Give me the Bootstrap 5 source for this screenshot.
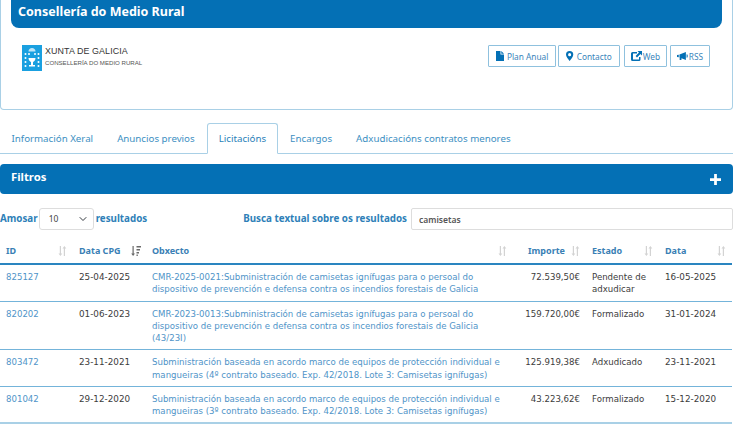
<!DOCTYPE html>
<html lang="gl"><head><meta charset="utf-8">
<link href="https://cdn.jsdelivr.net/npm/bootstrap@5.3.0/dist/css/bootstrap.min.css" rel="stylesheet">
<style>
html,body{height:424px;overflow:hidden;background:#fff}
body{width:733px;font-family:"Noto Sans",sans-serif;color:#333}
:root{--blue:#0470b5;--lblue:#a9d0e6;--txt:#2e7fb8}
.panel{height:110px;border:1px solid var(--lblue);border-top:0;border-radius:0 0 4px 4px;padding:0 10px;margin-bottom:13px}
.panel-head{background:var(--blue);color:#fff;height:28px;border-radius:0 0 8px 8px;padding:0 7px;font-size:12.5px;font-weight:700;line-height:24.500px;margin-bottom:17px}
.logo{margin-left:11px;height:26px;gap:3px;color:#333}
.logo b{display:block;font:500 8.9px/11px "Liberation Sans",sans-serif;letter-spacing:.1px;margin-top:1px}
.logo small{display:block;font:6.1px/8px "Liberation Sans",sans-serif;color:#555;margin-top:2px}
.tool{margin-right:12px}
.tool .btn{height:22px;padding:0 7px;font-size:8.3px;line-height:19px;border:1px solid #8fc1de;border-radius:1px;color:#3a85bb;background:#fff;display:flex;align-items:center;gap:3px;font-family:"Noto Sans",sans-serif}
.tool .btn+.btn{margin-left:2px}
.tool .btn.c{padding:0 7px}
.tool .btn.w{margin-left:4px;gap:1px;padding:0 6px}
.tool .btn.r{margin-left:3px;gap:1px;padding:0 6px}
.tool svg{fill:#0470b5;height:10px;width:auto}
.tool .r svg{height:8px}
.nav-tabs{border-bottom:1px solid var(--lblue);padding-left:0;height:31px;flex-wrap:nowrap;margin-bottom:10px}
.nav-tabs .nav-link{height:30px;padding:0 10.5px;line-height:30px;font-size:9.72px;color:#3d8fc2;border:1px solid transparent;border-radius:3px 3px 0 0;margin:0;background:none}
.nav-tabs .nav-item{margin-bottom:0}
.nav-tabs .nav-item+.nav-item{margin-left:1px}
.nav-tabs .nav-link.active{border-color:var(--lblue) var(--lblue) #fff;height:31px;color:#2a7fb8;background:#fff}
.filtros{background:var(--blue);color:#fff;height:30px;border-radius:4px;padding:0 12px 3px 11px;font-size:11.3px;font-weight:700;margin-bottom:14px}
.filtros svg{width:11px;height:11px;fill:#fff;margin-top:3px}
.ctrl{height:22px;margin-bottom:8px;font-size:9.8px;font-weight:700;color:var(--txt)}
.ctrl .form-select{width:55px;height:22px;min-height:0;padding:0 0 0 9px;font-size:8.5px;margin:0 2px 0 1px;border-color:#ddd;border-radius:3px;color:#444;background-position:right 5px center;background-size:10px 8px}
.ctrl .form-control{width:322px;height:22px;min-height:0;padding:0 7px;font-size:8.5px;margin-left:4px;border-color:#ddd;border-radius:2px;color:#555;font-weight:600}
.tbl{table-layout:fixed;width:732px;margin:0;font-family:"DejaVu Sans",Verdana,sans-serif;font-size:8.6px;line-height:12.1px;color:#333}
.tbl>thead>tr>th{height:26px;padding:0 6px;border-bottom:2px solid #2a85c0;font:700 9px "Noto Sans",sans-serif;color:#3a7fb5;vertical-align:middle;position:relative}
.tbl>tbody>tr>td{padding:6px 6px 5.5px;border-bottom:1px solid #74b4da;color:#3c3c3c;background:none;box-shadow:none}
.tbl>tbody>tr:last-child>td{border-bottom:2px solid #a9d0e6;padding-bottom:5px}
.tbl td.d{font-size:8.8px}
.tbl a{color:#4f94c8;text-decoration:none}
.tbl .imp{text-align:right}
.tbl>thead>tr>th.imp{padding-right:21px}
.sort{position:absolute;right:5px;top:8px;width:10px;height:10px;fill:#d3d3d3}
.sort.on{fill:#6a6a6a}
</style></head><body>
<div class="panel">
  <div class="panel-head">Consellería do Medio Rural</div>
  <div class="d-flex justify-content-between align-items-start">
    <div class="logo d-flex align-items-start">
      <svg width="20" height="26" viewBox="0 0 20 26"><rect width="20" height="26" fill="#1aa0e0"/><path d="M6.500 6.500c0-2 1.500-3.500 3.500-3.500s3.500 1.500 3.500 3.500z" fill="#bfe5f8"/><path d="M6.500 13h7c0 2.500-1.500 3.500-2.500 4v3h2v1.500h-6V20h2v-3c-1-.5-2.500-1.500-2.500-4z" fill="#fff"/><g fill="#fff"><circle cx="3.500" cy="9" r="1"/><circle cx="7" cy="9" r="1"/><circle cx="13" cy="9" r="1"/><circle cx="16.500" cy="9" r="1"/><circle cx="3.500" cy="13" r="1"/><circle cx="16.500" cy="13" r="1"/><circle cx="3.500" cy="17" r="1"/><circle cx="16.500" cy="17" r="1"/><circle cx="3.500" cy="21" r="1"/><circle cx="16.500" cy="21" r="1"/></g></svg>
      <div><b>XUNTA DE GALICIA</b><small>CONSELLERÍA DO MEDIO RURAL</small></div>
    </div>
    <div class="tool d-flex">
      <a class="btn" href="#"><svg viewBox="0 0 8 10"><path d="M0 0h4.500v3.500H8V10H0zM5.300 0 8 2.700H5.300z"/></svg>Plan Anual</a>
      <a class="btn c" href="#"><svg viewBox="0 0 8 11"><path fill-rule="evenodd" d="M4 0a4 4 0 0 1 4 4c0 2-2.500 5-4 7-1.500-2-4-5-4-7a4 4 0 0 1 4-4zm0 2.300a1.700 1.700 0 1 0 0 3.400 1.700 1.700 0 0 0 0-3.400z"/></svg>Contacto</a>
      <a class="btn w" href="#"><svg viewBox="0 0 11 10"><path d="M1.500 1H6v1.500H2v6h6V6h1.500v2.500A1.500 1.500 0 0 1 8 10H1.500A1.500 1.500 0 0 1 0 8.500v-6A1.500 1.500 0 0 1 1.500 1z"/><path d="M6.500 0H11v4.500L9.400 3 6 6.400 4.600 5 8 1.600z"/></svg>Web</a>
      <a class="btn r" href="#"><svg viewBox="0 0 12 9"><path d="M0 3.500 2 3v3l-2-.5zM2.800 2.800 10 0v9L5 7v2H3V6.200l-.2-.1zM10.800 2.500 12 3v3l-1.200.5z"/></svg>RSS</a>
    </div>
  </div>
</div>
<ul class="nav nav-tabs">
  <li class="nav-item"><a class="nav-link" href="#">Información Xeral</a></li>
  <li class="nav-item"><a class="nav-link" href="#">Anuncios previos</a></li>
  <li class="nav-item"><a class="nav-link active" href="#">Licitacións</a></li>
  <li class="nav-item"><a class="nav-link" href="#">Encargos</a></li>
  <li class="nav-item"><a class="nav-link" href="#">Adxudicacións contratos menores</a></li>
</ul>
<div class="filtros d-flex justify-content-between align-items-center"><span>Filtros</span><svg viewBox="0 0 12 12"><path d="M4.500 0h3v4.500H12v3H7.500V12h-3V7.500H0v-3h4.500z"/></svg></div>
<div class="ctrl d-flex align-items-center justify-content-between">
  <div class="d-flex align-items-center">Amosar <select class="form-select"><option>10</option></select> resultados</div>
  <div class="d-flex align-items-center">Busca textual sobre os resultados <input class="form-control" value="camisetas"></div>
</div>
<table class="table tbl">
<colgroup><col style="width:73px"><col style="width:73px"><col style="width:367px"><col style="width:73px"><col style="width:73px"><col style="width:73px"></colgroup>
<thead><tr>
<th>ID<svg class="sort" viewBox="0 0 10 10"><use href="#s"/></svg></th>
<th>Data CPG<svg class="sort on" viewBox="0 0 10 10"><path d="M1.500 0h1.200v7.500H4L2.100 10 .2 7.500h1.300zM5.500 0H10v1.500H5.500zM5.500 3H9v1.500H5.500zM5.500 6H8v1.500H5.500zM5.500 8.500h1.300V10H5.500z"/></svg></th>
<th>Obxecto<svg class="sort" viewBox="0 0 10 10"><use href="#s"/></svg></th>
<th class="imp">Importe<svg class="sort" viewBox="0 0 10 10"><use href="#s"/></svg></th>
<th>Estado<svg class="sort" viewBox="0 0 10 10"><use href="#s"/></svg></th>
<th>Data<svg class="sort" viewBox="0 0 10 10"><use href="#s"/></svg></th>
</tr></thead>
<tbody>
<tr><td><a href="#">825127</a></td><td class="d">25-04-2025</td><td><a href="#">CMR-2025-0021:Subministración de camisetas ignífugas para o persoal do dispositivo de prevención e defensa contra os incendios forestais de Galicia</a></td><td class="imp">72.539,50€</td><td>Pendente de adxudicar</td><td class="d">16-05-2025</td></tr>
<tr><td><a href="#">820202</a></td><td class="d">01-06-2023</td><td><a href="#">CMR-2023-0013:Subministración de camisetas ignífugas para o persoal do dispositivo de prevención e defensa contra os incendios forestais de Galicia (43/23I)</a></td><td class="imp">159.720,00€</td><td>Formalizado</td><td class="d">31-01-2024</td></tr>
<tr><td><a href="#">803472</a></td><td class="d">23-11-2021</td><td><a href="#">Subministración baseada en acordo marco de equipos de protección individual e mangueiras (4º contrato baseado. Exp. 42/2018. Lote 3: Camisetas ignífugas)</a></td><td class="imp">125.919,38€</td><td>Adxudicado</td><td class="d">23-11-2021</td></tr>
<tr><td><a href="#">801042</a></td><td class="d">29-12-2020</td><td><a href="#">Subministración baseada en acordo marco de equipos de protección individual e mangueiras (3º contrato baseado. Exp. 42/2018. Lote 3: Camisetas ignífugas)</a></td><td class="imp">43.223,62€</td><td>Formalizado</td><td class="d">15-12-2020</td></tr>
</tbody></table>
<svg width="0" height="0" class="d-block"><defs><g id="s"><path d="M1.800 0h1.200v7.500h1.300L2.400 10 .5 7.500h1.300zM7 10h-1.200V2.500H4.500L6.400 0l1.900 2.500H7z"/></g></defs></svg>
<script src="https://cdn.jsdelivr.net/npm/bootstrap@5.3.0/dist/js/bootstrap.bundle.min.js"></script>
</body></html>
